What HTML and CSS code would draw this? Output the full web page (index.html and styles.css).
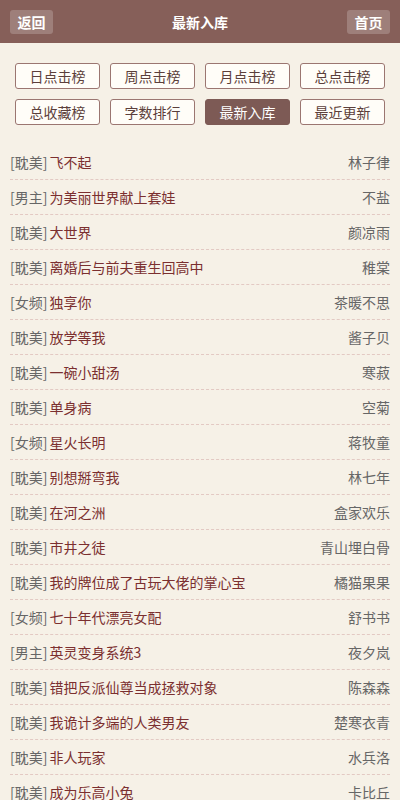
FILE: index.html
```html
<!DOCTYPE html>
<html lang="zh">
<head>
<meta charset="utf-8">
<link rel="stylesheet" href="styles.css">
</head>
<body>
<header class="top">
  <a class="hbtn">返回</a>
  <h1 class="title">最新入库</h1>
  <a class="hbtn">首页</a>
</header>
<nav class="tabs">
  <a class="tab">日点击榜</a>
  <a class="tab">周点击榜</a>
  <a class="tab">月点击榜</a>
  <a class="tab">总点击榜</a>
  <a class="tab">总收藏榜</a>
  <a class="tab">字数排行</a>
  <a class="tab active">最新入库</a>
  <a class="tab">最近更新</a>
</nav>
<ul class="list">
  <li class="row"><span class="name"><span class="tag">[耽美]</span>飞不起</span><span class="author">林子律</span></li>
  <li class="row"><span class="name"><span class="tag">[男主]</span>为美丽世界献上套娃</span><span class="author">不盐</span></li>
  <li class="row"><span class="name"><span class="tag">[耽美]</span>大世界</span><span class="author">颜凉雨</span></li>
  <li class="row"><span class="name"><span class="tag">[耽美]</span>离婚后与前夫重生回高中</span><span class="author">稚棠</span></li>
  <li class="row"><span class="name"><span class="tag">[女频]</span>独享你</span><span class="author">茶暖不思</span></li>
  <li class="row"><span class="name"><span class="tag">[耽美]</span>放学等我</span><span class="author">酱子贝</span></li>
  <li class="row"><span class="name"><span class="tag">[耽美]</span>一碗小甜汤</span><span class="author">寒菽</span></li>
  <li class="row"><span class="name"><span class="tag">[耽美]</span>单身病</span><span class="author">空菊</span></li>
  <li class="row"><span class="name"><span class="tag">[女频]</span>星火长明</span><span class="author">蒋牧童</span></li>
  <li class="row"><span class="name"><span class="tag">[耽美]</span>别想掰弯我</span><span class="author">林七年</span></li>
  <li class="row"><span class="name"><span class="tag">[耽美]</span>在河之洲</span><span class="author">盒家欢乐</span></li>
  <li class="row"><span class="name"><span class="tag">[耽美]</span>市井之徒</span><span class="author">青山埋白骨</span></li>
  <li class="row"><span class="name"><span class="tag">[耽美]</span>我的牌位成了古玩大佬的掌心宝</span><span class="author">橘猫果果</span></li>
  <li class="row"><span class="name"><span class="tag">[女频]</span>七十年代漂亮女配</span><span class="author">舒书书</span></li>
  <li class="row"><span class="name"><span class="tag">[男主]</span>英灵变身系统3</span><span class="author">夜夕岚</span></li>
  <li class="row"><span class="name"><span class="tag">[耽美]</span>错把反派仙尊当成拯救对象</span><span class="author">陈森森</span></li>
  <li class="row"><span class="name"><span class="tag">[耽美]</span>我诡计多端的人类男友</span><span class="author">楚寒衣青</span></li>
  <li class="row"><span class="name"><span class="tag">[耽美]</span>非人玩家</span><span class="author">水兵洛</span></li>
  <li class="row"><span class="name"><span class="tag">[耽美]</span>成为乐高小兔</span><span class="author">卡比丘</span></li>
</ul>
</body>
</html>
```
FILE: styles.css
```css
* { box-sizing: border-box; }
html, body { margin: 0; padding: 0; }
body {
  background: #f6f1e7;
  font-family: "Noto Sans CJK SC", "Noto Sans", sans-serif;
  font-size: 14px;
  color: #555;
}
.top {
  height: 43px;
  background: #865f59;
  display: flex;
  align-items: center;
  justify-content: space-between;
  padding: 0 10px;
}
.hbtn {
  width: 43px;
  height: 24px;
  line-height: 24px;
  text-align: center;
  background: rgba(255,255,255,0.2);
  border-radius: 3px;
  color: #fff;
  font-weight: bold;
  font-size: 14px;
}
.title {
  margin: 0;
  font-size: 14px;
  color: #fff;
  font-weight: bold;
}
.tabs {
  display: grid;
  grid-template-columns: repeat(4, 85px);
  gap: 10px;
  padding: 20px 15px 10px;
}
.tab {
  height: 26px;
  line-height: 24px;
  text-align: center;
  border: 1px solid #9b7671;
  border-radius: 3px;
  background: #fffdf8;
  color: #5c3f3b;
  font-size: 14px;
}
.tab.active {
  background: #7d5a55;
  border-color: #7d5a55;
  color: #fff;
}
.list {
  list-style: none;
  margin: 0;
  padding: 10px 10px 0;
}
.row {
  height: 35px;
  display: flex;
  align-items: center;
  justify-content: space-between;
  border-bottom: 1px dashed #e3c9c3;
  white-space: nowrap;
}
.name { color: #7b2f2f; }
.tag { color: #666; margin-right: 2px; }
.author { color: #666; }
```
